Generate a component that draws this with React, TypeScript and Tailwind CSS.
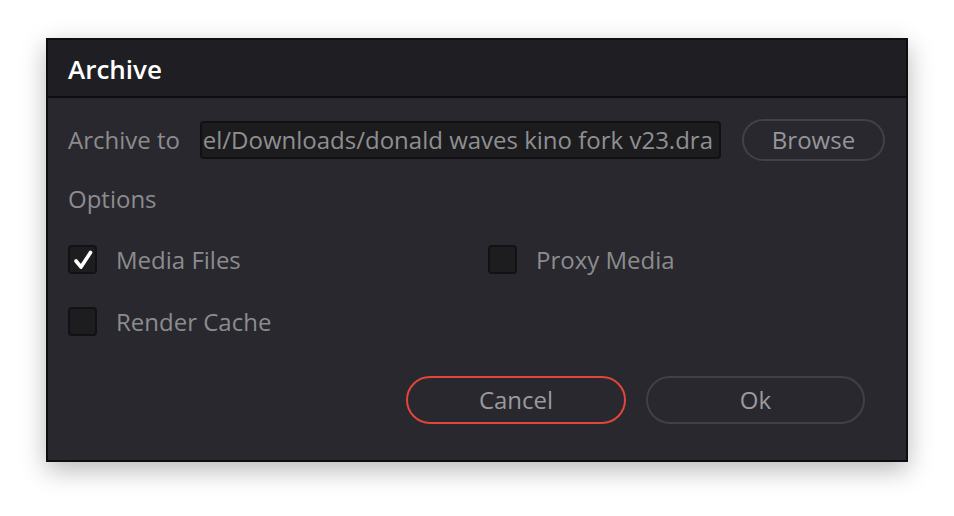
import React from "react";

function Checkbox({ checked }: { checked?: boolean }) {
  return (
    <div className="w-[29px] h-[29px] rounded-[4px] bg-[#1d1d1f] border-2 border-[#121214] flex items-center justify-center shrink-0">
      {checked && (
        <svg width="22" height="22" viewBox="0 0 22 22">
          <path d="M4 12 L9 18 L18.5 3.5" fill="none" stroke="#ffffff" strokeWidth="3.6" strokeLinecap="round" strokeLinejoin="round" />
        </svg>
      )}
    </div>
  );
}

function Option({ label, checked }: { label: string; checked?: boolean }) {
  return (
    <div className="flex items-center gap-[19px]">
      <Checkbox checked={checked} />
      <span className="text-[24px] text-[#8c8c8f] leading-none">{label}</span>
    </div>
  );
}

export default function App() {
  return (
    <div
      className="w-[954px] h-[516px] bg-white pl-[46px] pt-[38px]"
      style={{ fontFamily: '"Open Sans", "Noto Sans", sans-serif' }}
    >
      <div className="w-[862px] h-[424px] border-2 border-[#0e0e10] bg-[#28282e] shadow-[0_8px_24px_rgba(0,0,0,0.28)] flex flex-col">
        <div className="h-[58px] bg-[#1f1f23] border-b-2 border-[#0e0e10] flex items-center pl-[20px] shrink-0">
          <span className="text-[26px] font-semibold text-white leading-none pt-[1px]">Archive</span>
        </div>
        <div className="flex flex-col pl-[20px] pr-[20px]">
          <div className="flex items-center mt-[21px] h-[42px]">
            <span className="text-[24px] text-[#8c8c8f] leading-none w-[132px] shrink-0">Archive to</span>
            <div className="w-[521px] h-[38px] bg-[#1c1c1e] border-2 border-[#111113] rounded-[4px] overflow-hidden flex items-center justify-end pr-[6px]">
              <span className="text-[24px] text-[#8f8f92] leading-none whitespace-nowrap">
                el/Downloads/donald waves kino fork v23.dra
              </span>
            </div>
            <div className="ml-[21px] w-[143px] h-[42px] rounded-full border-2 border-[#414147] flex items-center justify-center">
              <span className="text-[24px] text-[#96969a] leading-none">Browse</span>
            </div>
          </div>
          <div className="mt-[26px] text-[24px] text-[#8c8c8f] leading-none">Options</div>
          <div className="mt-[34px] grid grid-cols-[420px_1fr] gap-y-[33px]">
            <Option label="Media Files" checked />
            <Option label="Proxy Media" />
            <Option label="Render Cache" />
          </div>
          <div className="mt-[40px] flex justify-end gap-[20px] pr-[21px]">
            <div className="w-[220px] h-[48px] rounded-full border-2 border-[#e2463a] flex items-center justify-center">
              <span className="text-[24px] text-[#9a9a9e] leading-none">Cancel</span>
            </div>
            <div className="w-[219px] h-[48px] rounded-full border-2 border-[#404046] flex items-center justify-center">
              <span className="text-[24px] text-[#9a9a9e] leading-none">Ok</span>
            </div>
          </div>
        </div>
      </div>
    </div>
  );
}
